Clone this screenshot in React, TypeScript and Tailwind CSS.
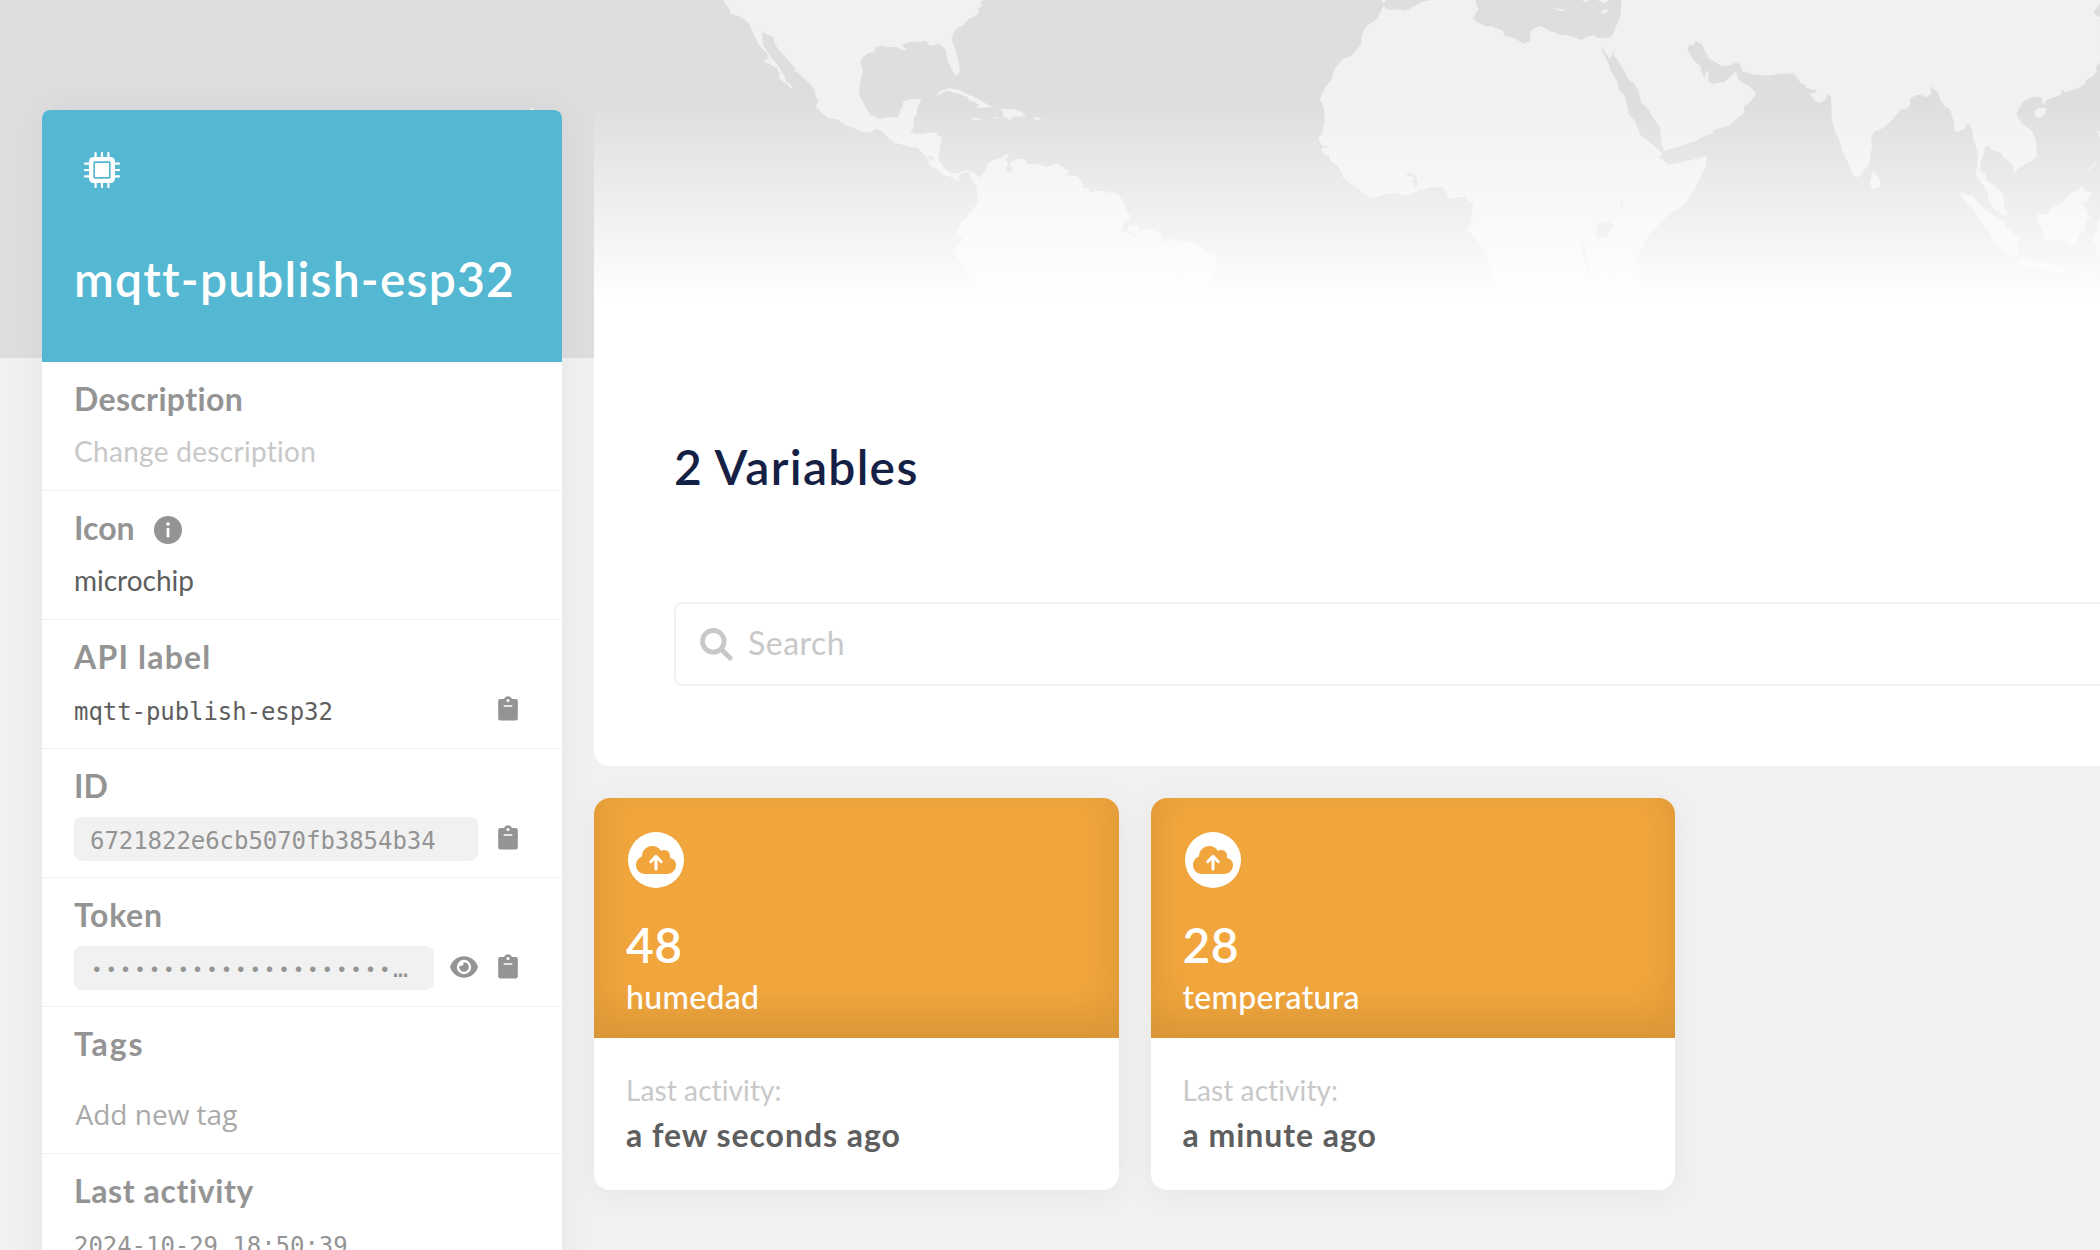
import type { ReactNode } from "react";

function WorldMap() {
  return (
    <svg className="absolute inset-0" width="2100" height="358" viewBox="0 0 2100 358" fill="#f1f1ef" aria-hidden="true">
      <path d="M529 112L531 107L536 111L536 114Z" />
      {/* Americas */}
      <g transform="translate(700 0) scale(0.3699 0.3333)">
        <path d="M62 0L81 30L82 42L100 46L122 60L133 73L143 98L158 133L180 160L186 170L182 178L172 181L174 187L187 191L193 196L207 205L214 217L215 236L227 246L234 252L247 268L250 262L241 250L233 247L231 235L219 212L208 191L194 174L180 151L170 135L168 95L181 103L198 112L201 127L212 150L234 175L258 205L255 212L268 220L279 233L298 252L310 270L313 290L319 299L314 321L328 337L347 354L370 358L390 372L413 383L436 394L454 398L466 394L474 388L487 390L501 405L523 427L547 434L570 442L587 442L605 462L619 480L618 493L630 503L644 510L656 525L678 530L698 545L702 537L698 528L713 516L725 517L733 530L737 543L747 558L751 604L741 626L727 640L722 655L707 662L702 681L696 690L694 711L711 711L705 729L688 747L692 775L706 786L724 820L742 861L756 884L760 925L1340 925L1345 885L1363 862L1391 826L1397 805L1397 775L1390 762L1370 758L1345 735L1320 723L1300 723L1272 716L1250 728L1245 703L1220 687L1195 687L1184 699L1174 717L1174 705L1157 700L1145 696L1127 698L1138 694L1149 667L1166 650L1155 636L1145 604L1128 581L1111 577L1102 582L1100 573L1070 573L1055 579L1050 565L1036 563L1034 545L1018 529L990 526L999 514L988 508L967 490L935 501L917 492L886 492L879 478L861 477L843 484L837 492L844 505L841 517L835 517L826 505L834 490L826 478L838 462L825 464L810 476L790 481L776 493L773 512L754 535L748 527L738 515L718 511L702 517L690 521L673 516L658 500L645 479L648 444L654 411L643 407L639 398L613 399L600 402L568 400L577 385L579 350L585 346L588 323L598 298L570 297L550 304L547 324L541 332L537 349L531 353L507 352L484 358L470 347L461 348L448 322L433 292L430 277L435 234L441 212L433 188L440 172L455 160L472 156L475 141L490 137L512 142L530 140L544 149L560 150L554 144L545 130L557 131L568 125L585 127L612 123L617 135L627 137L646 131L656 140L665 153L669 183L676 194L682 210L690 227L702 218L702 200L694 162L681 120L683 104L695 84L712 76L726 57L746 47L754 38L752 25L765 16L757 8L766 0Z" />
        <path d="M638 288L648 272L675 265L700 269L729 286L747 293L770 309L792 320L760 324L745 322L754 315L741 305L728 304L723 291L694 280L668 272Z" />
        <path d="M808 328L846 327L868 335L882 349L846 351L836 362L828 351L795 355L793 351L822 351L816 333ZM734 352L760 357L757 361L737 359ZM903 351L925 355L916 359L904 358ZM1158 677L1190 678L1181 699H1171L1157 692Z" />
        <g fill="#e0e0e0">
          <path d="M613 462L628 470L635 479L620 478Z" />
          <path d="M1272 866L1287 842L1308 829L1301 840L1286 847Z" opacity=".35" />
        </g>
      </g>
      {/* Africa and the Middle East */}
      <g transform="translate(1280 0) scale(0.3333)">
        <path d="M304 0H318L312 10L307 7ZM310 18L320 27L330 30L358 28L377 33L397 22L412 14L430 4L455 0H585L596 27L579 53L591 65L618 80L636 78L652 87L668 91L673 107L692 111L735 131L752 121L750 98L759 86L781 77L800 87L809 94L829 98L839 104L865 106L905 120L919 112L940 105L956 114L992 112L1000 101L1023 42L1024 0H1262V124H1246L1243 132L1226 137L1221 149L1241 181L1262 200V412L1248 424L1228 428L1194 441L1152 452L1144 425L1140 384L1124 359L1104 326L1083 307L1076 274L1061 248L1047 240L1028 205L1009 174L1000 168L1005 147L996 163L990 177L978 161L962 136L967 156L980 177L994 215L1014 249L1016 269L1034 286L1041 311L1046 344L1065 362L1082 407L1098 416L1146 459L1142 469L1133 474L1146 477L1166 494L1262 475V533L1246 560L1229 594L1200 625L1175 639L1151 659L1119 694L1100 714L1082 749L1069 775L1080 792L1076 820L1090 849L1098 855L1100 930H645L647 865L639 852L632 791L621 769L610 745L584 714L561 689L578 670L572 653L580 620L575 607L562 600L557 591L536 591L512 597L501 588L500 574L487 561L451 563L415 573L374 589L352 580L320 582L278 595L258 584L237 567L203 545L187 530L188 519L173 500L149 479L148 465L137 468L125 454L126 443H143V438H129L114 416L126 399L135 362L131 323L119 297L136 263L155 237L163 209L187 178L214 168L244 133L243 111L258 79L291 58Z" />
        <path d="M905 0H928L918 7ZM953 0H991L972 10ZM813 24L854 28V33L833 31ZM960 37L971 28L986 29L984 36L971 41Z" />
        <g fill="#dedede">
          <path d="M377 525L389 516L410 533L414 554L405 563L397 558L406 551L395 546L402 540L398 530ZM949 683L954 671L975 665H987L1003 677L992 684L984 714L960 713L949 720ZM1021 592L1026 611L1034 630L1022 614ZM905 728L914 742L917 768L938 819L933 823L910 780ZM990 835L998 844L1001 887L996 870Z" />
        </g>
      </g>
      {/* Asia */}
      <g transform="translate(1680 0) scale(0.3333)">
        <path d="M0 0H1260V10L1240 38L1260 52V190L1248 198L1250 214L1240 228L1218 241L1217 250L1196 265L1154 277L1145 266L1144 283L1100 300L1090 317L1086 293L1061 290L1042 298L1030 304L1009 341L1024 368L1058 395L1070 430L1071 468L1056 482L1019 501L999 522L1000 501L988 483L970 470L963 459L936 450L928 439L915 438L912 461L901 486V512L915 519L920 544L940 554L960 570L971 585V615L985 643L973 647L945 629L929 606L921 572L900 543L887 524L893 489L892 453L880 415L875 384L864 370L854 386L829 397L821 388L824 374L810 328L794 318L780 301L775 275L762 268L752 258L753 281L738 292L724 285L709 285L690 296V315L680 326L662 328L635 361L608 385L586 393L573 409L576 444L570 458L569 492L560 500L540 528L529 532L517 521L499 478L487 455L482 430L464 391L456 364L453 290L440 282L438 296L420 309L405 303L389 279L405 279L411 266L401 270L379 264L376 254L362 249L342 220L300 222L260 227L215 222L186 214L180 192L167 188L140 199L124 197L86 175L65 132L45 123L43 132L26 137L21 149L41 181L60 200L65 216L74 235L79 211L86 216L85 244L98 251L134 246L168 214L174 237L190 250L211 260L229 281L206 312L193 317L190 341L174 354L150 375L103 389L97 400L50 418L0 440ZM0 488L72 470L81 468L75 508L58 533L40 575L20 600L0 620Z" />
        <path d="M580 509L600 540L603 557L591 567H576L570 546ZM1064 336L1073 324L1102 323L1094 341L1080 354L1066 349ZM834 579L850 581L858 586H874L894 607L912 625L930 638L962 661L976 662V676L990 692L1003 704L1014 703L1025 719L1014 722V768L991 766L967 748L944 726L927 697L908 675L901 660L889 650L886 634L866 616ZM1013 777L1061 783L1070 791L1095 787L1115 789L1132 799L1157 806L1158 817L1112 810L1066 804L1036 799L1015 785ZM1069 650L1074 641L1107 645L1109 627L1140 612L1170 583L1195 571L1204 557L1215 573L1240 579L1225 590L1231 604L1209 604L1214 625L1224 633L1222 647L1238 654L1221 661L1213 690L1194 710L1189 731L1170 740L1143 720L1110 724L1094 718L1085 685L1070 668ZM1260 658L1250 670L1251 690L1239 710L1240 725L1250 730V765H1260ZM1248 482V491L1213 525ZM1254 392L1260 394V417ZM1202 820L1240 817V823L1205 824Z" />
      </g>
    </svg>
  );
}

function ChipIcon() {
  return (
    <svg width="36" height="36" viewBox="0 0 36 36" fill="none" aria-hidden="true">
      <path d="M11.6 1v34M18 1v34M24.4 1v34M1 11.6h34M1 18h34M1 24.4h34" stroke="#fff" strokeWidth="2.1" strokeLinecap="round" />
      <rect x="5" y="5" width="26" height="26" rx="4.5" fill="#fff" />
      <rect x="10.2" y="10.2" width="15.6" height="15.6" rx=".6" stroke="#55b8d2" strokeWidth="1.7" />
    </svg>
  );
}

function InfoIcon() {
  return (
    <svg className="ml-[19.5px] mt-[3px]" width="28" height="28" viewBox="0 0 28 28" aria-hidden="true">
      <circle cx="14" cy="14" r="14" fill="#949494" />
      <circle cx="14" cy="8" r="1.8" fill="#fff" />
      <path d="M14 13.2v7" stroke="#fff" strokeWidth="2.8" strokeLinecap="round" />
    </svg>
  );
}

function ClipboardIcon() {
  return (
    <svg className="mb-[3px]" width="20" height="25" viewBox="0 0 20 25" aria-hidden="true">
      <path fill="#949494" d="M2.2 3h3.9C6.7 1.3 8.2.2 10 .2s3.300 1.100 3.900 2.800h3.900c1.100 0 2 .9 2 2v17.600c0 1.100-.9 2-2 2H2.200c-1.100 0-2-.9-2-2V5c0-1.100.9-2 2-2Z" />
      <circle cx="10" cy="4.500" r="1.500" fill="#fff" />
      <path d="M6.200 10h7.600" stroke="#fff" strokeWidth="1.500" strokeLinecap="round" />
    </svg>
  );
}

function EyeIcon() {
  return (
    <svg className="mb-[3px]" width="28" height="22" viewBox="0 0 28 22" aria-hidden="true">
      <path fill="#949494" d="M14 .2C20 .2 25 3.600 27.700 9.900q.4 1.100 0 2.200C25 18.400 20 21.800 14 21.800S3 18.400.3 12.100q-.4-1.100 0-2.200C3 3.600 8 .2 14 .2Z" />
      <circle cx="14" cy="11" r="7.200" fill="#fff" />
      <path fill="#949494" d="M14 6.200a4.800 4.800 0 1 1-4.600 3.500c2.500 1.100 4.900-.9 4.100-3.500Z" />
    </svg>
  );
}

function CloudUploadIcon() {
  return (
    <svg width="56" height="56" viewBox="0 0 56 56" aria-hidden="true">
      <circle cx="28" cy="28" r="28" fill="#fff" />
      <path fill="#f1a63d" d="M17 42C12 42 8 38 8 33c0-4 2.400-7.200 6-8.500C14 18.600 18.500 14 24.200 14c3.700 0 6.900 1.900 8.700 4.800 1.100-.6 2.200-.9 3.400-.9 3.600 0 6 2.900 5.800 6.500-.1.500-.1.900-.3 1.300 3.700.8 6.200 3.600 6.200 7.400 0 5-3.800 8.900-8.800 8.900Z" />
      <path d="M28 37V25M22.700 29.700 28 24.400l5.300 5.300" fill="none" stroke="#fff" strokeWidth="3" strokeLinecap="round" strokeLinejoin="round" />
    </svg>
  );
}

function SearchIcon() {
  return (
    <svg width="33" height="33" viewBox="0 0 33 33" fill="none" stroke="#c8c8c8" aria-hidden="true">
      <circle cx="13.300" cy="13.300" r="10.800" strokeWidth="4.800" />
      <path d="m21.500 21.500 8.600 8.600" strokeWidth="5" strokeLinecap="round" />
    </svg>
  );
}

function Field({ label, hint, children }: { label: ReactNode; hint?: ReactNode; children: ReactNode }) {
  return (
    <section className="h-[129px] shrink-0 border-b border-[#f0f0f0] pt-[17px] pr-[44px] pl-8">
      <h2 className="flex h-10 items-center text-[32px] leading-10 font-bold tracking-[0.35px] text-[#949494]">
        {label}
        {hint}
      </h2>
      <div className="mt-[11px] flex h-11 items-center">{children}</div>
    </section>
  );
}

function Sidebar() {
  return (
    <aside className="mt-[110px] ml-[42px] flex h-[1240px] w-[520px] shrink-0 flex-col overflow-hidden rounded-t-lg bg-white shadow-[0_0_40px_rgba(0,0,0,0.05)]">
      <header className="h-[252px] shrink-0 bg-[#55b8d2] pt-[42px] pl-8">
        <div className="pl-[9.5px]">
          <ChipIcon />
        </div>
        <h1 className="mt-[61px] text-[48px] leading-[60px] font-semibold tracking-[1.2px] whitespace-nowrap text-white">mqtt-publish-esp32</h1>
      </header>
      <Field label="Description">
        <p className="pb-0.5 text-[28px] leading-9 tracking-[0.3px] text-[#c8c8c8]">Change description</p>
      </Field>
      <Field label={<span className="tracking-[0px]">Icon</span>} hint={<InfoIcon />}>
        <p className="pb-0.5 text-[28px] leading-9 text-[#5e5e5e]">microchip</p>
      </Field>
      <Field label={<span className="tracking-[1.2px]">API label</span>}>
        <p className="flex-1 pt-1 font-['DejaVu_Sans_Mono',monospace] text-[24px] leading-8 tracking-[-0.07px] text-[#5e5e5e]">mqtt-publish-esp32</p>
        <ClipboardIcon />
      </Field>
      <Field label={<span className="tracking-[0px]">ID</span>}>
        <div className="mr-5 flex h-11 w-[404px] items-center rounded-lg bg-[#f1f1f1] pt-1 pl-4 font-['DejaVu_Sans_Mono',monospace] text-[24px] leading-8 tracking-[-0.05px] text-[#949494]">6721822e6cb5070fb3854b34</div>
        <ClipboardIcon />
      </Field>
      <Field label={<span className="tracking-[0.7px]">Token</span>}>
        <div className="mr-4 flex h-11 w-[360px] items-baseline rounded-lg bg-[#f1f1f1] pt-[8px] pl-[16.8px] font-['Liberation_Mono',monospace] text-[#949494]">
          <span className="text-[20px] leading-8 tracking-[2.4px]">•••••••••••••••••••••</span>
          <span className="relative top-px text-[24px] leading-8 font-bold">…</span>
        </div>
        <EyeIcon />
        <div className="ml-5">
          <ClipboardIcon />
        </div>
      </Field>
      <section className="h-[147px] shrink-0 border-b border-[#f0f0f0] pt-[17px] pl-8">
        <h2 className="text-[32px] leading-10 font-bold tracking-[1.9px] text-[#949494]">Tags</h2>
        <p className="mt-[30px] pl-[1.5px] font-['Open_Sans',sans-serif] text-[28px] leading-10 text-[#a9a9a9]">Add new tag</p>
      </section>
      <section className="pt-[17px] pl-8">
        <h2 className="text-[32px] leading-10 font-bold tracking-[0.6px] text-[#949494]">Last activity</h2>
        <p className="mt-[19px] font-['DejaVu_Sans_Mono',monospace] text-[24px] leading-8 tracking-[-0.05px] text-[#949494]">2024-10-29 18:50:39</p>
      </section>
    </aside>
  );
}

function VariableCard({ value, name, activity }: { value: string; name: string; activity: string }) {
  return (
    <article className="h-[392px] w-[524.5px] overflow-hidden rounded-2xl bg-white shadow-[0_4px_30px_rgba(0,0,0,0.05)]">
      <div className="h-[240px] bg-[#f1a63d] pt-[34px] pl-8 text-white shadow-[inset_0_-20px_40px_rgba(0,0,0,0.11)]">
        <div className="pl-0.5">
          <CloudUploadIcon />
        </div>
        <p className="mt-[27px] text-[48px] leading-[60px] font-semibold tracking-[0.5px]">{value}</p>
        <p className="mt-1.5 text-[32px] leading-8 font-medium tracking-[0.3px]">{name}</p>
      </div>
      <div className="pt-9 pl-8">
        <p className="text-[28px] leading-8 tracking-[0.1px] text-[#c8c8c8]">Last activity:</p>
        <p className="mt-[9px] text-[32px] leading-10 font-bold tracking-[0.95px] text-[#5e5e5e]">{activity}</p>
      </div>
    </article>
  );
}

export default function App() {
  return (
    <div className="relative h-[1250px] w-[2100px] overflow-hidden bg-[#f1f1f1] font-['Lato',sans-serif]">
      <div className="absolute inset-x-0 top-0 h-[358px] overflow-hidden bg-[#dedede]">
        <WorldMap />
      </div>
      <div className="relative flex gap-8">
        <Sidebar />
        <main className="flex-1">
          <section className="mt-[102px] flex h-[664px] flex-col rounded-bl-2xl bg-[linear-gradient(to_bottom,rgba(255,255,255,0)_0px,rgba(255,255,255,1)_200px)] pt-[335px] pl-20">
            <h2 className="text-[48px] leading-[60px] font-semibold tracking-[1.3px] whitespace-nowrap text-[#152144]">2 Variables</h2>
            <div className="mt-[105px] flex h-[84px] items-center gap-[15px] rounded-l-lg border-2 border-r-0 border-[#f1f1f1] bg-white pl-6">
              <SearchIcon />
              <span className="pb-[3px] text-[32px] leading-10 tracking-[0.5px] text-[#c8c8c8]">Search</span>
            </div>
          </section>
          <div className="mt-8 flex gap-8">
            <VariableCard value="48" name="humedad" activity="a few seconds ago" />
            <VariableCard value="28" name="temperatura" activity="a minute ago" />
          </div>
        </main>
      </div>
    </div>
  );
}
